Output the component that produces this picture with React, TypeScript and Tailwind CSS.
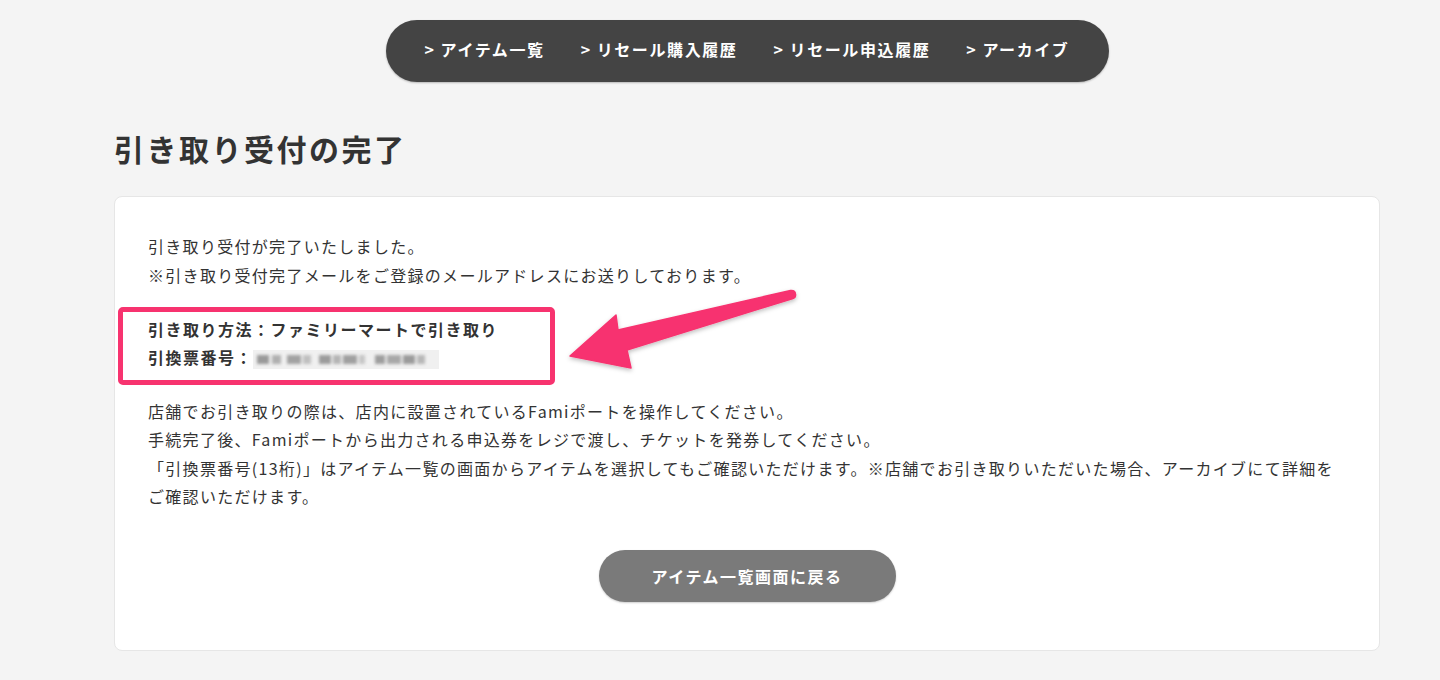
import React from "react";

const font = {
  fontFamily: '"Noto Sans CJK JP", "Noto Sans", sans-serif',
};

function NavItem({ label }: { label: string }) {
  return (
    <a className="flex items-center text-[16px] font-bold tracking-[1.6px] text-white whitespace-nowrap">
      <span className="mr-[5px] text-[16px]">&gt;</span>
      {label}
    </a>
  );
}

function BlurredNumber() {
  const blocks = [
    [0, 12, "#9a9a9a"],
    [15, 9, "#b0b0b0"],
    [30, 14, "#a2a2a2"],
    [46, 8, "#c0c0c0"],
    [62, 12, "#9c9c9c"],
    [76, 8, "#b5b5b5"],
    [86, 14, "#a0a0a0"],
    [102, 6, "#c6c6c6"],
    [118, 10, "#9e9e9e"],
    [130, 14, "#a8a8a8"],
    [146, 12, "#9b9b9b"],
    [160, 8, "#b8b8b8"],
  ] as const;
  return (
    <span className="relative inline-block h-[19px] w-[186px] align-middle bg-[#f0f0f0]">
      <span className="block h-full blur-[1.5px]">
        {blocks.map(([l, w, c], i) => (
          <span
            key={i}
            className="absolute top-[5px] h-[9px]"
            style={{ left: l + 4, width: w, background: c }}
          />
        ))}
      </span>
    </span>
  );
}

export default function App() {
  return (
    <div className="relative min-h-[680px] w-full bg-[#f4f4f4] text-[#333]" style={font}>
      <div className="ml-[114px] w-[1266px] pt-[20px]">
        <nav className="mx-auto flex h-[62px] w-[723px] items-center justify-center gap-[36px] rounded-full bg-[#444444] pb-[4px] shadow-[0_1px_2px_rgba(0,0,0,0.25)]">
          <NavItem label="アイテム一覧" />
          <NavItem label="リセール購入履歴" />
          <NavItem label="リセール申込履歴" />
          <NavItem label="アーカイブ" />
        </nav>

        <h1 className="mt-[46px] text-[30px] font-bold leading-[40px] tracking-[2.5px] text-[#333]">
          引き取り受付の完了
        </h1>

        <div className="mt-[28px] rounded-[8px] border border-[#e6e6e6] bg-white px-[33px] pt-[35px] pb-[48px] text-[16px] tracking-[1.3px]">
          <p className="leading-[29px] whitespace-nowrap">
            引き取り受付が完了いたしました。
            <br />
            ※引き取り受付完了メールをご登録のメールアドレスにお送りしております。
          </p>

          <div className="relative mt-[25px] leading-[28px] font-bold whitespace-nowrap tracking-[1.5px]">
            <div>引き取り方法：ファミリーマートで引き取り</div>
            <div>
              引換票番号：
              <BlurredNumber />
            </div>
            <div className="pointer-events-none absolute left-[-30px] top-[-8px] h-[78px] w-[437px] rounded-[5px] border-[5px] border-[#f7336f]" />
          </div>

          <p className="mt-[26px] leading-[28.4px] whitespace-nowrap">
            店舗でお引き取りの際は、店内に設置されているFamiポートを操作してください。
            <br />
            手続完了後、Famiポートから出力される申込券をレジで渡し、チケットを発券してください。
            <br />
            「引換票番号(13桁)」はアイテム一覧の画面からアイテムを選択してもご確認いただけます。※店舗でお引き取りいただいた場合、アーカイブにて詳細を
            <br />
            ご確認いただけます。
          </p>

          <div className="mt-[39px] flex justify-center">
            <button className="h-[52px] w-[297px] rounded-full bg-[#7a7a7a] text-[16px] font-bold tracking-[1.5px] text-white shadow-[0_1px_2px_rgba(0,0,0,0.2)]">
              アイテム一覧画面に戻る
            </button>
          </div>
        </div>
        <div className="h-[30px]" />
      </div>

      <svg
        className="pointer-events-none absolute left-0 top-0"
        width="1440"
        height="680"
        viewBox="0 0 1440 680"
      >
        <defs>
          <filter id="sh" x="-20%" y="-20%" width="140%" height="160%">
            <feDropShadow dx="0" dy="2" stdDeviation="2" floodColor="#000" floodOpacity="0.25" />
          </filter>
        </defs>
        <path
          d="M790.5 290.5 Q795 290 795.5 294 Q796 297.5 793 298.5 L627 350 L631 368 L570 356 L616 315 L618 330 Z"
          fill="#f7336f"
          strokeLinejoin="round"
          stroke="#f7336f"
          strokeWidth="1.5"
          filter="url(#sh)"
        />
      </svg>
    </div>
  );
}
